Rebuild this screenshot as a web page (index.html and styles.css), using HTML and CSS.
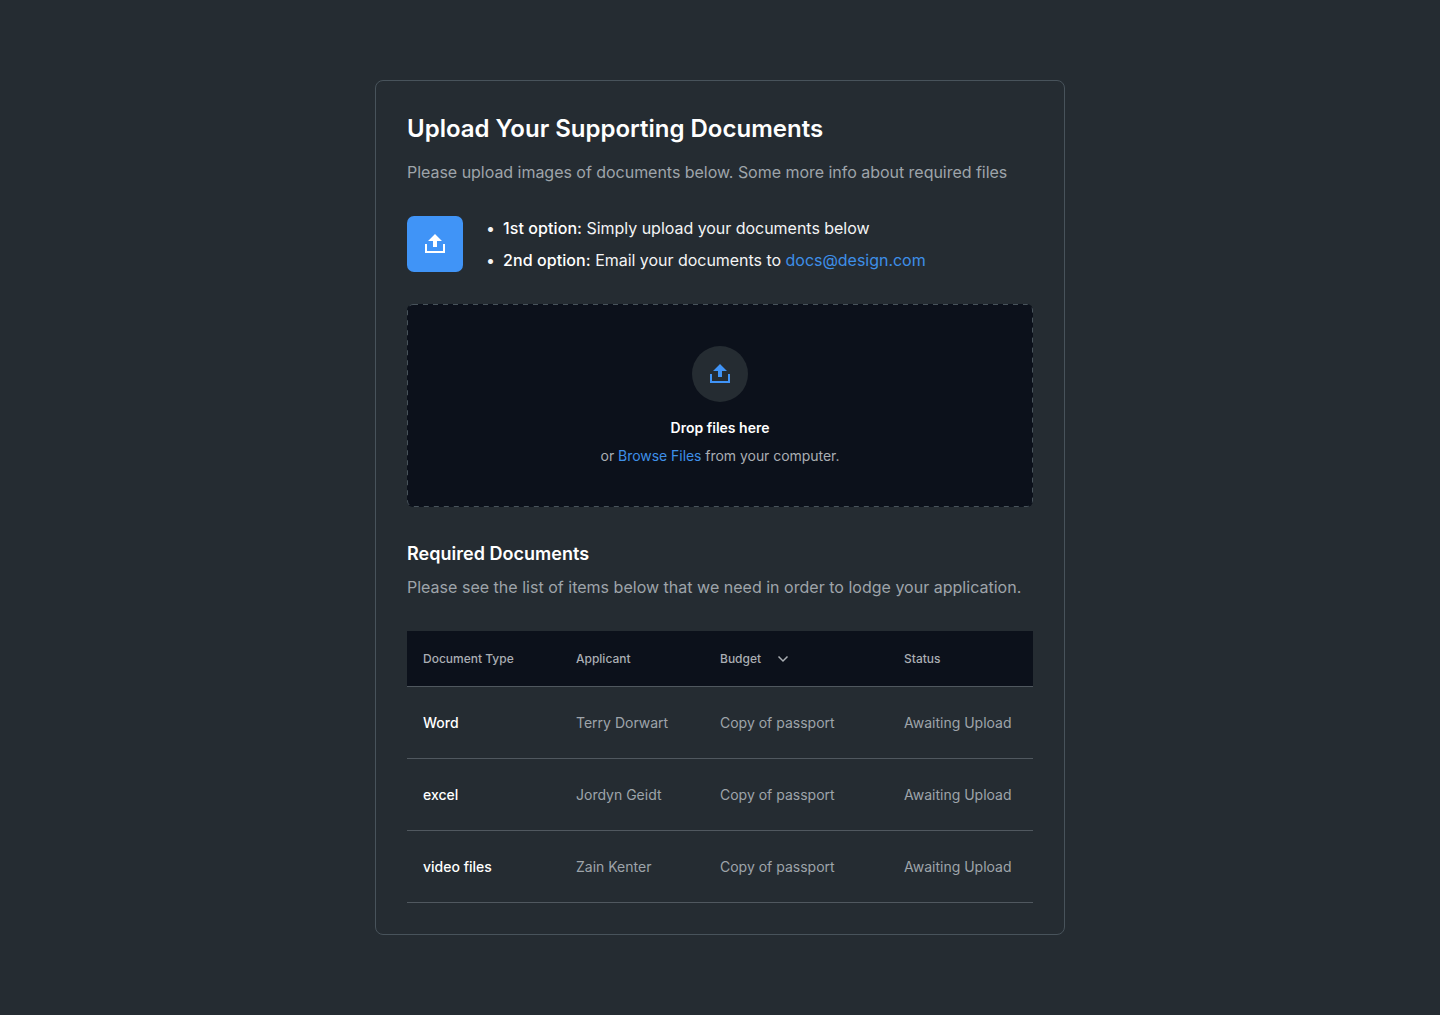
FILE: index.html
```html
<!DOCTYPE html>
<html lang="en">
<head>
<meta charset="utf-8">
<title>Upload Your Supporting Documents</title>
<link rel="stylesheet" href="styles.css">
</head>
<body>
<main class="card">
  <h1 class="title">Upload Your Supporting Documents</h1>
  <p class="lead">Please upload images of documents below. Some more info about required files</p>
  <section class="options">
    <div class="tile">
      <svg width="24" height="24" viewBox="0 0 24 24" fill="currentColor"><path d="M2 12h2v7h16v-7h2v9H2z"/><path d="M12 2l7 7h-5v6h-4V9H5z"/></svg>
    </div>
    <ul class="option-list">
      <li><b>1st option:</b> Simply upload your documents below</li>
      <li><b>2nd option:</b> Email your documents to <a href="#">docs@design.com</a></li>
    </ul>
  </section>
  <section class="dropzone">
    <svg class="outline" width="626" height="203"><rect x=".5" y=".5" width="625" height="202" rx="5.500"/></svg>
    <div class="circle">
      <svg width="24" height="24" viewBox="0 0 24 24" fill="currentColor"><path d="M2 12h2v7h16v-7h2v9H2z"/><path d="M12 2l7 7h-5v6h-4V9H5z"/></svg>
    </div>
    <p class="drop-title">Drop files here</p>
    <p class="drop-text">or <a href="#">Browse Files</a> from your computer.</p>
  </section>
  <h2 class="subtitle">Required Documents</h2>
  <p class="lead">Please see the list of items below that we need in order to lodge your application.</p>
  <div class="table">
    <div class="row head"><span>Document Type</span><span>Applicant</span><span class="sort">Budget <svg width="12" height="8" viewBox="0 0 12 8"><path d="M1.500 1.500L6 6l4.500-4.500"/></svg></span><span>Status</span></div>
    <div class="row"><b>Word</b><span>Terry Dorwart</span><span>Copy of passport</span><span>Awaiting Upload</span></div>
    <div class="row"><b>excel</b><span>Jordyn Geidt</span><span>Copy of passport</span><span>Awaiting Upload</span></div>
    <div class="row"><b>video files</b><span>Zain Kenter</span><span>Copy of passport</span><span>Awaiting Upload</span></div>
  </div>
</main>
</body>
</html>
```
FILE: styles.css
```css
* { box-sizing: border-box; }
body { margin: 0; padding: 80px 0; min-height: 1015px; background: #252c32; font-family: Inter, sans-serif; color: #fff; }
h1, h2, p, ul { margin: 0; padding: 0; }
a { color: #3e8fe8; text-decoration: none; }
.card { width: 690px; height: 855px; margin: 0 auto; padding: 32px 31px 31px; border: 1px solid #48535b; border-radius: 8px; }
.title { font-size: 24px; line-height: 32px; font-weight: 600; }
.lead { margin-top: 15px; font-size: 16px; line-height: 24px; letter-spacing: -0.03px; color: #9ea4aa; }
.options { display: flex; gap: 23px; margin-top: 32px; height: 56px; }
.tile { width: 56px; height: 56px; border-radius: 7px; background: #4094f7; display: grid; place-items: center; }
.option-list { list-style: none; display: grid; gap: 8px; font-size: 16px; line-height: 24px; letter-spacing: -0.03px; color: #f3f4f5; }
.option-list li::before { content: "•"; display: inline-block; width: 17px; }
.option-list b { font-weight: 500; letter-spacing: 0.08px; color: #fff; }
.dropzone { position: relative; height: 203px; margin-top: 32px; padding-top: 42px; border-radius: 6px; background: #0c111b; text-align: center; }
.outline { position: absolute; inset: 0; fill: none; stroke: #48535b; stroke-dasharray: 5 5; }
.circle { width: 56px; height: 56px; margin: 0 auto; border-radius: 50%; background: #252c32; color: #4094f7; display: grid; place-items: center; }
.drop-title { margin-top: 14px; font-size: 14px; line-height: 24px; font-weight: 600; }
.drop-text { margin-top: 4px; font-size: 14px; line-height: 24px; letter-spacing: -0.04px; color: #aaaeb3; }
.subtitle { margin-top: 34px; font-size: 18px; line-height: 26px; font-weight: 600; letter-spacing: 0.02px; }
.subtitle + .lead { margin-top: 8px; letter-spacing: 0.015px; }
.table { margin-top: 32px; }
.row { display: grid; grid-template-columns: 153px 144px 184px 1fr; align-items: center; height: 72px; padding-left: 16px; border-bottom: 1px solid #50585f; font-size: 14px; color: #9ea4aa; }
.row b { font-weight: 500; color: #fff; }
.head { height: 56px; background: #0c111b; font-size: 12px; font-weight: 500; color: #aaaeb3; }
.sort { display: flex; align-items: center; gap: 16px; }
.sort svg { fill: none; stroke: currentColor; stroke-width: 1.500; }
```
